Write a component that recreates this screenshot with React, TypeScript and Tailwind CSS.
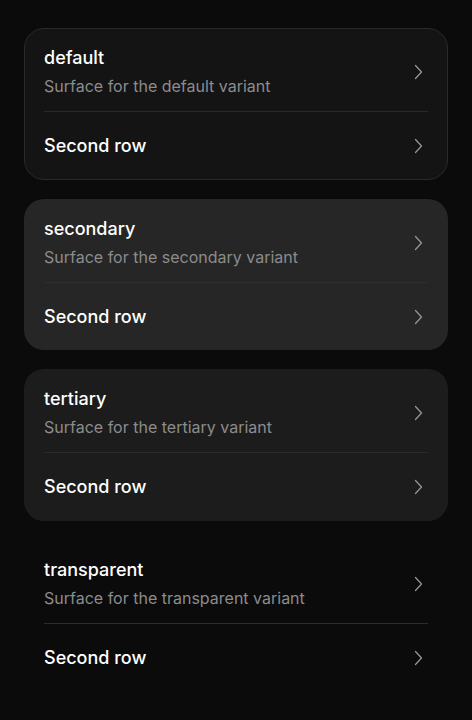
import React from "react";

type Variant = "default" | "secondary" | "tertiary" | "transparent";

const surface: Record<Variant, string> = {
  default: "bg-[#141414] border-[#2a2a2a]",
  secondary: "bg-[#262626] border-transparent",
  tertiary: "bg-[#1c1c1c] border-transparent",
  transparent: "bg-transparent border-transparent",
};

const divider: Record<Variant, string> = {
  default: "bg-[#2a2a2a]",
  secondary: "bg-[#2e2e2e]",
  tertiary: "bg-[#2a2a2a]",
  transparent: "bg-[#2c2c2c]",
};

const Chevron = () => (
  <svg width="9" height="16" viewBox="0 0 9 16" fill="none" className="shrink-0 mr-[5px]">
    <path d="M1.5 1.5L7.5 8L1.5 14.5" stroke="#999999" strokeWidth="1.2" strokeLinecap="round" strokeLinejoin="round" />
  </svg>
);

const SurfaceCard: React.FC<{ variant: Variant }> = ({ variant }) => (
  <div className={`rounded-[20px] border ${surface[variant]}`}>
    <div className="flex items-center justify-between px-[19px] pt-[17px] pb-[13px]">
      <div className="flex flex-col gap-1">
        <span className="text-[18px] leading-6 font-[450] text-white">{variant}</span>
        <span className="text-[16px] leading-6 text-[#8c8c8c]">Surface for the {variant} variant</span>
      </div>
      <Chevron />
    </div>
    <div className={`mx-[19px] h-px ${divider[variant]}`} />
    <div className="flex items-center justify-between px-[19px] pt-[22px] pb-[20.67px]">
      <span className="text-[18px] leading-6 font-[450] text-white">Second row</span>
      <Chevron />
    </div>
  </div>
);

export default function App() {
  const variants: Variant[] = ["default", "secondary", "tertiary", "transparent"];
  return (
    <div
      className="min-h-[720px] bg-[#0b0b0b] px-6 pt-7 flex flex-col gap-[19px]"
      style={{ fontFamily: "Inter, 'Noto Sans', sans-serif" }}
    >
      {variants.map((v) => (
        <SurfaceCard key={v} variant={v} />
      ))}
    </div>
  );
}
